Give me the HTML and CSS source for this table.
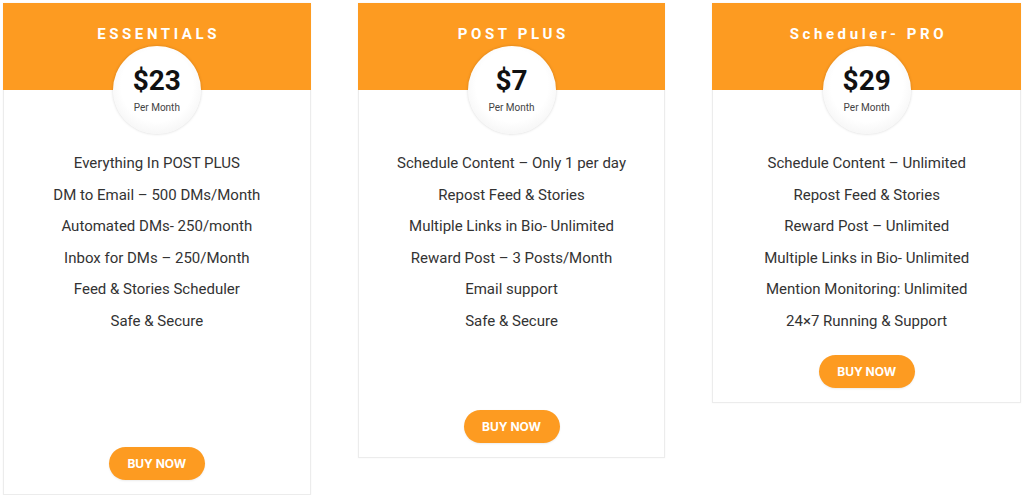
FILE: index.html
```html
<!DOCTYPE html>
<html>
<head>
<meta charset="utf-8">
<link rel="stylesheet" href="styles.css">
</head>
<body>
<div class="plans">
  <div class="card card-1">
    <div class="head">
      <div class="title">ESSENTIALS</div>
      <div class="circle"><div class="price">$23</div><div class="per">Per Month</div></div>
    </div>
    <ul class="features">
      <li>Everything In POST PLUS</li>
      <li>DM to Email – 500 DMs/Month</li>
      <li>Automated DMs- 250/month</li>
      <li>Inbox for DMs – 250/Month</li>
      <li>Feed &amp; Stories Scheduler</li>
      <li>Safe &amp; Secure</li>
    </ul>
    <a class="buy">BUY NOW</a>
  </div>
  <div class="card card-2">
    <div class="head">
      <div class="title">POST PLUS</div>
      <div class="circle"><div class="price">$7</div><div class="per">Per Month</div></div>
    </div>
    <ul class="features">
      <li>Schedule Content – Only 1 per day</li>
      <li>Repost Feed &amp; Stories</li>
      <li>Multiple Links in Bio- Unlimited</li>
      <li>Reward Post – 3 Posts/Month</li>
      <li>Email support</li>
      <li>Safe &amp; Secure</li>
    </ul>
    <a class="buy">BUY NOW</a>
  </div>
  <div class="card card-3">
    <div class="head">
      <div class="title title-mixed">Scheduler- PRO</div>
      <div class="circle"><div class="price">$29</div><div class="per">Per Month</div></div>
    </div>
    <ul class="features">
      <li>Schedule Content – Unlimited</li>
      <li>Repost Feed &amp; Stories</li>
      <li>Reward Post – Unlimited</li>
      <li>Multiple Links in Bio- Unlimited</li>
      <li>Mention Monitoring: Unlimited</li>
      <li>24×7 Running &amp; Support</li>
    </ul>
    <a class="buy">BUY NOW</a>
  </div>
</div>
</body>
</html>
```
FILE: styles.css
```css
* { box-sizing: border-box; }
html, body { margin: 0; background: #fff; }
body { padding: 3px 3px 0 3px; font-family: Roboto, "Liberation Sans", Arial, sans-serif; }
.plans { display: flex; align-items: flex-start; gap: 47px; }
.card {
  width: 308px;
  display: flex;
  flex-direction: column;
  align-items: center;
  border: 1px solid #ececec;
  border-top: 0;
  box-shadow: 0 0 2px rgba(0,0,0,0.04);
  background: #fff;
}
.card-1 { height: 492px; }
.card-2 { height: 455px; }
.card-3 { height: 400px; width: 309px; }
.head {
  width: calc(100% + 2px);
  margin: 0 -1px;
  height: 87px;
  background: #fd9b21;
  display: flex;
  flex-direction: column;
  align-items: center;
  padding-top: 21px;
}
.title {
  color: #fff;
  font-weight: 700;
  font-size: 15px;
  line-height: 20px;
  letter-spacing: 3.6px;
  padding-left: 3.6px;
}
.circle {
  margin-top: 2px;
  width: 88px;
  height: 88px;
  flex: none;
  border-radius: 50%;
  background: radial-gradient(circle at 50% 45%, #ffffff 55%, #f2f2f2 85%, #e6e6e6 100%);
  box-shadow: 0 0 3px rgba(0,0,0,0.18);
  display: flex;
  flex-direction: column;
  align-items: center;
  padding-top: 19px;
}
.price { font-weight: 700; font-size: 28px; line-height: 32px; color: #111; }
.per { font-size: 10px; line-height: 12px; color: #444; margin-top: 5px; }
.features {
  list-style: none;
  margin: 0;
  padding: 58px 0 0 0;
  text-align: center;
  color: #333;
  font-size: 15px;
  line-height: 31.6px;
}
.buy {
  margin-top: auto;
  margin-bottom: 14px;
  width: 96px;
  height: 33px;
  border-radius: 17px;
  background: #fd9b21;
  color: #fff;
  font-family: Inter, "Open Sans", sans-serif;
  font-weight: 700;
  font-size: 12px;
  display: flex;
  align-items: center;
  justify-content: center;
  box-shadow: 0 1px 2px rgba(0,0,0,0.08);
}
```
